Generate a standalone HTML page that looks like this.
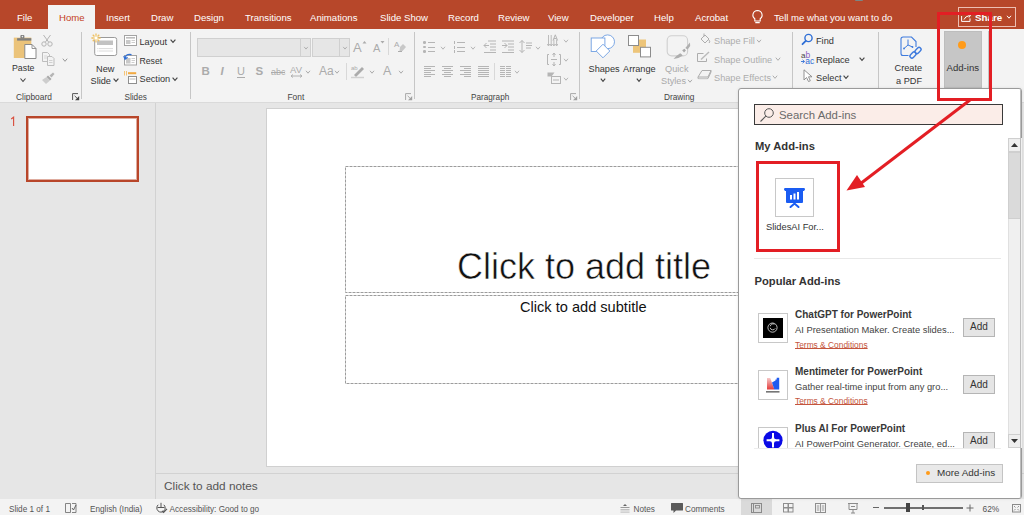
<!DOCTYPE html>
<html><head><meta charset="utf-8"><style>
html,body{margin:0;padding:0}
body{width:1024px;height:515px;overflow:hidden;position:relative;background:#E6E6E6;font-family:"Liberation Sans",sans-serif}
.t{position:absolute;line-height:1;white-space:nowrap}
svg{overflow:visible}
</style></head><body>
<div style="position:absolute;left:0px;top:0px;width:1024px;height:29px;background:#B7472A"></div>
<div style="position:absolute;left:0px;top:29px;width:1024px;height:73px;background:#F3F3F3"></div>
<div style="position:absolute;left:0px;top:102px;width:1024px;height:1px;background:#DADADA"></div>
<div style="position:absolute;left:155px;top:103px;width:1px;height:396px;background:#D2D2D2"></div>
<div style="position:absolute;left:48px;top:5px;width:47px;height:24px;background:#F3F3F3"></div>
<div class="t" style="left:17px;top:13px;font-size:9.60px;color:#FFFFFF;font-weight:normal;">File</div>
<div class="t" style="left:106px;top:13px;font-size:9.60px;color:#FFFFFF;font-weight:normal;">Insert</div>
<div class="t" style="left:151px;top:13px;font-size:9.60px;color:#FFFFFF;font-weight:normal;">Draw</div>
<div class="t" style="left:194px;top:13px;font-size:9.60px;color:#FFFFFF;font-weight:normal;">Design</div>
<div class="t" style="left:245px;top:13px;font-size:9.60px;color:#FFFFFF;font-weight:normal;">Transitions</div>
<div class="t" style="left:310px;top:13px;font-size:9.60px;color:#FFFFFF;font-weight:normal;">Animations</div>
<div class="t" style="left:380px;top:13px;font-size:9.60px;color:#FFFFFF;font-weight:normal;">Slide Show</div>
<div class="t" style="left:448px;top:13px;font-size:9.60px;color:#FFFFFF;font-weight:normal;">Record</div>
<div class="t" style="left:498px;top:13px;font-size:9.60px;color:#FFFFFF;font-weight:normal;">Review</div>
<div class="t" style="left:548px;top:13px;font-size:9.60px;color:#FFFFFF;font-weight:normal;">View</div>
<div class="t" style="left:590px;top:13px;font-size:9.60px;color:#FFFFFF;font-weight:normal;">Developer</div>
<div class="t" style="left:654px;top:13px;font-size:9.60px;color:#FFFFFF;font-weight:normal;">Help</div>
<div class="t" style="left:695px;top:13px;font-size:9.60px;color:#FFFFFF;font-weight:normal;">Acrobat</div>
<div class="t" style="left:59px;top:13px;font-size:9.60px;color:#C43E1C;font-weight:normal;">Home</div>
<svg style="position:absolute;left:751px;top:9px" width="13" height="16" viewBox="0 0 13 16"><path d="M6.5 1.5 a4.6 4.6 0 0 0 -2.7 8.3 v2.2 h5.4 v-2.2 a4.6 4.6 0 0 0 -2.7 -8.3z M4.3 13.6 h4.4" fill="none" stroke="#fff" stroke-width="1.1"/></svg>
<div class="t" style="left:774px;top:13px;font-size:9.60px;color:#FFFFFF;font-weight:normal;">Tell me what you want to do</div>
<div style="position:absolute;left:958px;top:7px;width:58px;height:19.5px;border:1px solid #EDBFB3;box-sizing:border-box"></div>
<svg style="position:absolute;left:961px;top:14px" width="10" height="8" viewBox="0 0 10 8"><path d="M0.6 2 v5.4 h8.4 v-3" fill="none" stroke="#fff" stroke-width="1"/><path d="M3 5.5 q1 -3 5.5 -4" fill="none" stroke="#fff" stroke-width="1"/><path d="M7 0 L9.5 1.2 L8 3.5" fill="none" stroke="#fff" stroke-width="1"/></svg>
<div class="t" style="left:975px;top:13px;font-size:9.80px;color:#FFFFFF;font-weight:bold;">Share</div>
<svg style="position:absolute;left:1005px;top:14px" width="8" height="6" viewBox="0 0 8 6"><path d="M2.00 1.80 L4 4.20 L6.00 1.80" fill="none" stroke="#fff" stroke-width="1"/></svg>
<div style="position:absolute;left:855px;top:0px;width:8px;height:1.2px;background:#7A8686;border-radius:0 0 3px 3px"></div>
<div style="position:absolute;left:81px;top:32px;width:1px;height:67px;background:#C6C6C6"></div>
<div style="position:absolute;left:190px;top:32px;width:1px;height:67px;background:#C6C6C6"></div>
<div style="position:absolute;left:414px;top:32px;width:1px;height:67px;background:#C6C6C6"></div>
<div style="position:absolute;left:579px;top:32px;width:1px;height:67px;background:#C6C6C6"></div>
<div style="position:absolute;left:792px;top:32px;width:1px;height:67px;background:#C6C6C6"></div>
<div style="position:absolute;left:878px;top:32px;width:1px;height:67px;background:#C6C6C6"></div>
<div style="position:absolute;left:988px;top:31px;width:1px;height:57px;background:#C6C6C6"></div>
<div class="t" style="left:16px;top:93px;font-size:8.40px;color:#444;font-weight:normal;">Clipboard</div>
<div class="t" style="left:124.5px;top:94px;font-size:8.20px;color:#444;font-weight:normal;">Slides</div>
<div class="t" style="left:287.5px;top:93px;font-size:8.40px;color:#444;font-weight:normal;">Font</div>
<div class="t" style="left:471px;top:94px;font-size:8.20px;color:#444;font-weight:normal;">Paragraph</div>
<div class="t" style="left:664px;top:93px;font-size:8.30px;color:#444;font-weight:normal;">Drawing</div>
<svg style="position:absolute;left:72px;top:92.8px" width="8" height="8" viewBox="0 0 8 8"><path d="M0.6 7 V0.6 H6" fill="none" stroke="#555" stroke-width="1"/><path d="M2.6 2.8 L6 6.2" stroke="#555" stroke-width="1"/><path d="M3 7.2 H7.2 V3z" fill="#444"/></svg>
<svg style="position:absolute;left:405px;top:92.8px" width="8" height="8" viewBox="0 0 8 8"><path d="M0.6 7 V0.6 H6" fill="none" stroke="#A8A8A8" stroke-width="1"/><path d="M2.6 2.8 L6 6.2" stroke="#A8A8A8" stroke-width="1"/><path d="M3 7.2 H7.2 V3z" fill="#A0A0A0"/></svg>
<svg style="position:absolute;left:570px;top:92.8px" width="8" height="8" viewBox="0 0 8 8"><path d="M0.6 7 V0.6 H6" fill="none" stroke="#A8A8A8" stroke-width="1"/><path d="M2.6 2.8 L6 6.2" stroke="#A8A8A8" stroke-width="1"/><path d="M3 7.2 H7.2 V3z" fill="#A0A0A0"/></svg>
<svg style="position:absolute;left:13px;top:34px" width="24" height="26" viewBox="0 0 24 26"><rect x="0.8" y="3.6" width="17.5" height="20.4" fill="#EBC37A"/><rect x="4.1" y="4.2" width="14.2" height="2.4" fill="#7E7E7E"/><rect x="7.4" y="1" width="4" height="3.6" rx="1" fill="#7E7E7E"/><circle cx="9.4" cy="2.6" r="0.8" fill="#EEE"/><path d="M11.8 10.5 h7.2 l4 4 v10 h-11.2z" fill="#fff" stroke="#8a8a8a" stroke-width="1"/><path d="M19 10.5 v4 h4" fill="none" stroke="#8a8a8a" stroke-width="0.9"/></svg>
<div class="t" style="left:12px;top:64px;font-size:8.80px;color:#333;font-weight:normal;">Paste</div>
<svg style="position:absolute;left:19px;top:77px" width="8" height="6" viewBox="0 0 8 6"><path d="M1.50 1.50 L4 4.50 L6.50 1.50" fill="none" stroke="#444" stroke-width="1.1"/></svg>
<svg style="position:absolute;left:41px;top:34px" width="12" height="13" viewBox="0 0 12 13"><circle cx="3" cy="10" r="2.2" fill="none" stroke="#B4B4B4"/><circle cx="9" cy="10" r="2.2" fill="none" stroke="#B4B4B4"/><path d="M4.3 8.2 L9.5 1 M7.7 8.2 L2.5 1" stroke="#B4B4B4" stroke-width="1"/></svg>
<svg style="position:absolute;left:41px;top:52px" width="14" height="14" viewBox="0 0 14 14"><path d="M1.5 0.5 h5 l2 2 v7 h-7z" fill="#F3F3F3" stroke="#BDBDBD"/><path d="M3 4 h3 M3 6 h3" stroke="#CFCFCF" stroke-width="0.8"/><path d="M6.5 4.5 h4.5 l2 2 v7 h-6.5z" fill="#F3F3F3" stroke="#BDBDBD"/><path d="M8 8.5 h3.5 M8 10.5 h3.5" stroke="#C8C8C8" stroke-width="0.8"/></svg>
<svg style="position:absolute;left:61px;top:57px" width="8" height="6" viewBox="0 0 8 6"><path d="M1.80 1.68 L4 4.32 L6.20 1.68" fill="none" stroke="#999" stroke-width="1"/></svg>
<svg style="position:absolute;left:41px;top:72px" width="14" height="12" viewBox="0 0 14 12"><path d="M8.5 3.5 L12 0.5 L13.5 2 L10.5 5.5z" fill="#B5B5B5"/><path d="M7 3.5 L10.5 7 L9 8.5 L5.5 5z" fill="#A8A8A8"/><path d="M5.5 5 L9 8.5 L5 12 L1 8z" fill="#CDCDCD"/></svg>
<svg style="position:absolute;left:86px;top:30px" width="36" height="30" viewBox="0 0 36 30"><rect x="8.7" y="7.5" width="22" height="18" rx="2" fill="#fff" stroke="#9A9A9A" stroke-width="1"/><rect x="11" y="10.5" width="16" height="4.5" fill="#C2C2C2"/><path d="M13 18.6 h14 M13 21 h14" stroke="#D0D0D0" stroke-width="0.8"/><path d="M11.5 18.6 h0.8 M11.5 21 h0.8" stroke="#BBB" stroke-width="0.8"/><path d="M12.20 8.00 L14.60 8.00 M11.56 9.56 L13.25 11.25 M10.00 10.20 L10.00 12.60 M8.44 9.56 L6.75 11.25 M7.80 8.00 L5.40 8.00 M8.44 6.44 L6.75 4.75 M10.00 5.80 L10.00 3.40 M11.56 6.44 L13.25 4.75 " stroke="#F0C060" stroke-width="1.3"/><circle cx="10" cy="8" r="1.9" fill="#fff" stroke="#F5D58E" stroke-width="0.8"/></svg>
<div class="t" style="left:96px;top:65px;font-size:9.20px;color:#333;font-weight:normal;">New</div>
<div class="t" style="left:90.5px;top:77px;font-size:9.20px;color:#333;font-weight:normal;">Slide</div>
<svg style="position:absolute;left:111.8px;top:77px" width="8" height="6" viewBox="0 0 8 6"><path d="M1.60 1.56 L4 4.44 L6.40 1.56" fill="none" stroke="#444" stroke-width="1.1"/></svg>
<svg style="position:absolute;left:123px;top:35px" width="14" height="12" viewBox="0 0 14 12"><rect x="1.5" y="0.5" width="12" height="10" fill="#fff" stroke="#A3A3A3"/><rect x="3" y="2" width="9" height="1.6" fill="#BDBDBD"/><rect x="3" y="5" width="4.5" height="4" fill="#C8C8C8"/><path d="M8.5 5.5 h3.5 M8.5 7.5 h3.5" stroke="#C8C8C8" stroke-width="0.9"/></svg>
<div class="t" style="left:139.5px;top:38px;font-size:9.20px;color:#333;font-weight:normal;">Layout</div>
<svg style="position:absolute;left:168.7px;top:37.8px" width="8" height="6" viewBox="0 0 8 6"><path d="M1.60 1.56 L4 4.44 L6.40 1.56" fill="none" stroke="#444" stroke-width="1.1"/></svg>
<svg style="position:absolute;left:122px;top:52px" width="15" height="14" viewBox="0 0 15 14"><rect x="2.5" y="3.5" width="12" height="9.5" fill="#fff" stroke="#A3A3A3"/><rect x="4" y="6" width="4.5" height="5.5" fill="#C8C8C8"/><path d="M9.5 6.5 h3.5 M9.5 8.5 h3.5 M9.5 10.5 h3" stroke="#C8C8C8" stroke-width="0.9"/><path d="M3.2 6.2 Q4 1.2 9.5 2.6" fill="none" stroke="#2F6FD6" stroke-width="1.3"/><path d="M1.8 4 L3 7.2 L5.6 5.2" fill="none" stroke="#2F6FD6" stroke-width="1.2"/></svg>
<div class="t" style="left:139.5px;top:57px;font-size:8.70px;color:#333;font-weight:normal;">Reset</div>
<svg style="position:absolute;left:122px;top:70px" width="15" height="14" viewBox="0 0 15 14"><path d="M6 3.2 h8.2" stroke="#F0A840" stroke-width="2"/><path d="M2.5 1 v4.5 M4.5 1 v4.5" stroke="#F4BE6A" stroke-width="0.9"/><rect x="6.5" y="6.5" width="8" height="7" fill="#fff" stroke="#8f8f8f"/><path d="M7.5 9 h6" stroke="#B0B0B0" stroke-width="0.9"/></svg>
<div class="t" style="left:139.5px;top:75px;font-size:9.20px;color:#333;font-weight:normal;">Section</div>
<svg style="position:absolute;left:171.4px;top:75.5px" width="8" height="6" viewBox="0 0 8 6"><path d="M1.60 1.56 L4 4.44 L6.40 1.56" fill="none" stroke="#444" stroke-width="1.1"/></svg>
<div style="position:absolute;left:197px;top:38px;width:114px;height:19px;background:#E6E6E6;border:1px solid #D0D0D0;box-sizing:border-box"></div>
<div style="position:absolute;left:300px;top:38px;width:1px;height:19px;background:#D0D0D0"></div>
<svg style="position:absolute;left:302px;top:45px" width="8" height="6" viewBox="0 0 8 6"><path d="M2.20 1.92 L4 4.08 L5.80 1.92" fill="none" stroke="#AAA" stroke-width="0.9"/></svg>
<div style="position:absolute;left:312px;top:38px;width:38px;height:19px;background:#E6E6E6;border:1px solid #D0D0D0;box-sizing:border-box"></div>
<div style="position:absolute;left:339px;top:38px;width:1px;height:19px;background:#D0D0D0"></div>
<svg style="position:absolute;left:340.5px;top:45px" width="8" height="6" viewBox="0 0 8 6"><path d="M2.20 1.92 L4 4.08 L5.80 1.92" fill="none" stroke="#AAA" stroke-width="0.9"/></svg>
<div class="t" style="left:353px;top:41px;font-size:13.00px;color:#ABABAB;font-weight:normal;">A</div>
<svg style="position:absolute;left:362px;top:40px" width="5" height="4" viewBox="0 0 5 4"><path d="M0.5 3.5 L2.5 1 L4.5 3.5z" fill="#ABABAB"/></svg>
<div class="t" style="left:373px;top:43px;font-size:11.00px;color:#ABABAB;font-weight:normal;">A</div>
<svg style="position:absolute;left:380px;top:40px" width="5" height="4" viewBox="0 0 5 4"><path d="M0.5 1 L2.5 3.5 L4.5 1z" fill="#ABABAB"/></svg>
<div style="position:absolute;left:388px;top:38px;width:1px;height:17px;background:#D8D8D8"></div>
<svg style="position:absolute;left:394px;top:40px" width="12" height="12" viewBox="0 0 12 12"><text x="0" y="7" font-size="8" fill="#ABABAB" font-family="Liberation Sans">A</text><path d="M6 7 L9 4 L12 7 L8.5 11 L5.5 11z" fill="#C8C8C8"/><path d="M4 11.5 h4" stroke="#ABABAB"/></svg>
<div class="t" style="left:201.5px;top:66px;font-size:11.50px;color:#ABABAB;font-weight:bold;">B</div>
<div class="t" style="left:220.5px;top:66px;font-size:11.50px;color:#ABABAB;font-weight:bold;font-style:italic">I</div>
<div class="t" style="left:237px;top:66px;font-size:11.00px;color:#ABABAB;font-weight:normal;">U</div>
<div style="position:absolute;left:237px;top:76.5px;width:8px;height:1px;background:#ABABAB"></div>
<div class="t" style="left:255.5px;top:66px;font-size:11.50px;color:#ABABAB;font-weight:bold;">S</div>
<div class="t" style="left:271px;top:68px;font-size:9.00px;color:#ABABAB;font-weight:normal;">abc</div>
<div style="position:absolute;left:271px;top:71.5px;width:14px;height:1px;background:#ABABAB"></div>
<div class="t" style="left:290px;top:65px;font-size:9.50px;color:#ABABAB;font-weight:normal;">AV</div>
<svg style="position:absolute;left:290px;top:74px" width="13" height="4" viewBox="0 0 13 4"><path d="M1 2 h11 M3 0.5 L1 2 L3 3.5 M10 0.5 L12 2 L10 3.5" fill="none" stroke="#ABABAB" stroke-width="0.9"/></svg>
<svg style="position:absolute;left:304px;top:69px" width="8" height="6" viewBox="0 0 8 6"><path d="M2.00 1.80 L4 4.20 L6.00 1.80" fill="none" stroke="#ABABAB" stroke-width="1"/></svg>
<div class="t" style="left:319px;top:65px;font-size:12.00px;color:#ABABAB;font-weight:normal;">Aa</div>
<svg style="position:absolute;left:333px;top:69px" width="8" height="6" viewBox="0 0 8 6"><path d="M2.00 1.80 L4 4.20 L6.00 1.80" fill="none" stroke="#ABABAB" stroke-width="1"/></svg>
<div style="position:absolute;left:346px;top:63px;width:1px;height:17px;background:#D8D8D8"></div>
<svg style="position:absolute;left:351px;top:64.5px" width="14" height="13" viewBox="0 0 14 13"><text x="0" y="5" font-size="6" fill="#ABABAB" font-family="Liberation Sans">ab</text><path d="M3 10 L11 2 L13 4 L5 12z" fill="#ABABAB"/><path d="M0 12.5 h13" stroke="#D0D0D0" stroke-width="1.5"/></svg>
<svg style="position:absolute;left:368px;top:69px" width="8" height="6" viewBox="0 0 8 6"><path d="M2.00 1.80 L4 4.20 L6.00 1.80" fill="none" stroke="#ABABAB" stroke-width="1"/></svg>
<div class="t" style="left:383px;top:65px;font-size:12.50px;color:#ABABAB;font-weight:normal;">A</div>
<svg style="position:absolute;left:397px;top:69px" width="8" height="6" viewBox="0 0 8 6"><path d="M2.00 1.80 L4 4.20 L6.00 1.80" fill="none" stroke="#ABABAB" stroke-width="1"/></svg>
<div style="position:absolute;left:423px;top:41.0px;width:2.5px;height:2.5px;background:#B5B5B5;border-radius:50%"></div>
<div style="position:absolute;left:428px;top:42.0px;width:7px;height:1px;background:#B5B5B5"></div>
<div style="position:absolute;left:423px;top:45.5px;width:2.5px;height:2.5px;background:#B5B5B5;border-radius:50%"></div>
<div style="position:absolute;left:428px;top:46.5px;width:7px;height:1px;background:#B5B5B5"></div>
<div style="position:absolute;left:423px;top:50.0px;width:2.5px;height:2.5px;background:#B5B5B5;border-radius:50%"></div>
<div style="position:absolute;left:428px;top:51.0px;width:7px;height:1px;background:#B5B5B5"></div>
<svg style="position:absolute;left:439px;top:45px" width="8" height="6" viewBox="0 0 8 6"><path d="M2.00 1.80 L4 4.20 L6.00 1.80" fill="none" stroke="#B5B5B5" stroke-width="1"/></svg>
<div style="position:absolute;left:454px;top:41.0px;width:1px;height:3px;background:#B5B5B5"></div>
<div style="position:absolute;left:457px;top:42.0px;width:8px;height:1px;background:#B5B5B5"></div>
<div style="position:absolute;left:454px;top:45.5px;width:1px;height:3px;background:#B5B5B5"></div>
<div style="position:absolute;left:457px;top:46.5px;width:8px;height:1px;background:#B5B5B5"></div>
<div style="position:absolute;left:454px;top:50.0px;width:1px;height:3px;background:#B5B5B5"></div>
<div style="position:absolute;left:457px;top:51.0px;width:8px;height:1px;background:#B5B5B5"></div>
<svg style="position:absolute;left:469px;top:45px" width="8" height="6" viewBox="0 0 8 6"><path d="M2.00 1.80 L4 4.20 L6.00 1.80" fill="none" stroke="#B5B5B5" stroke-width="1"/></svg>
<svg style="position:absolute;left:483px;top:40px" width="14" height="13" viewBox="0 0 14 13"><path d="M5 1 h8 M7 4 h6 M7 7 h6 M7 10 h6 M1 12.5 h12" stroke="#B5B5B5"/><path d="M1 5.5 h5 M3.5 3 L1 5.5 L3.5 8" fill="none" stroke="#B5B5B5"/></svg>
<svg style="position:absolute;left:501px;top:40px" width="14" height="13" viewBox="0 0 14 13"><path d="M1 1 h12 M7 4 h6 M7 7 h6 M7 10 h6 M1 12.5 h12" stroke="#B5B5B5"/><path d="M1 5.5 h5 M3.5 3 L6 5.5 L3.5 8" fill="none" stroke="#B5B5B5"/></svg>
<svg style="position:absolute;left:519px;top:40px" width="14" height="13" viewBox="0 0 14 13"><path d="M3 0.5 v12 M0.5 3 L3 0.5 L5.5 3 M0.5 10 L3 12.5 L5.5 10" fill="none" stroke="#B5B5B5"/><path d="M7 3 h6 M7 5.5 h6 M7 8 h5" stroke="#B5B5B5"/></svg>
<svg style="position:absolute;left:534px;top:45px" width="8" height="6" viewBox="0 0 8 6"><path d="M2.00 1.80 L4 4.20 L6.00 1.80" fill="none" stroke="#B5B5B5" stroke-width="1"/></svg>
<div style="position:absolute;left:424px;top:65.5px;width:11px;height:1px;background:#B5B5B5"></div>
<div style="position:absolute;left:424px;top:67.55px;width:7px;height:1px;background:#B5B5B5"></div>
<div style="position:absolute;left:424px;top:69.6px;width:11px;height:1px;background:#B5B5B5"></div>
<div style="position:absolute;left:424px;top:71.65px;width:7px;height:1px;background:#B5B5B5"></div>
<div style="position:absolute;left:424px;top:73.7px;width:11px;height:1px;background:#B5B5B5"></div>
<div style="position:absolute;left:424px;top:75.75px;width:7px;height:1px;background:#B5B5B5"></div>
<div style="position:absolute;left:442px;top:65.5px;width:11px;height:1px;background:#B5B5B5"></div>
<div style="position:absolute;left:444px;top:67.55px;width:7px;height:1px;background:#B5B5B5"></div>
<div style="position:absolute;left:442px;top:69.6px;width:11px;height:1px;background:#B5B5B5"></div>
<div style="position:absolute;left:444px;top:71.65px;width:7px;height:1px;background:#B5B5B5"></div>
<div style="position:absolute;left:442px;top:73.7px;width:11px;height:1px;background:#B5B5B5"></div>
<div style="position:absolute;left:444px;top:75.75px;width:7px;height:1px;background:#B5B5B5"></div>
<div style="position:absolute;left:460px;top:65.5px;width:11px;height:1px;background:#B5B5B5"></div>
<div style="position:absolute;left:464px;top:67.55px;width:7px;height:1px;background:#B5B5B5"></div>
<div style="position:absolute;left:460px;top:69.6px;width:11px;height:1px;background:#B5B5B5"></div>
<div style="position:absolute;left:464px;top:71.65px;width:7px;height:1px;background:#B5B5B5"></div>
<div style="position:absolute;left:460px;top:73.7px;width:11px;height:1px;background:#B5B5B5"></div>
<div style="position:absolute;left:464px;top:75.75px;width:7px;height:1px;background:#B5B5B5"></div>
<div style="position:absolute;left:478px;top:65.5px;width:11px;height:1px;background:#B5B5B5"></div>
<div style="position:absolute;left:478px;top:67.55px;width:11px;height:1px;background:#B5B5B5"></div>
<div style="position:absolute;left:478px;top:69.6px;width:11px;height:1px;background:#B5B5B5"></div>
<div style="position:absolute;left:478px;top:71.65px;width:11px;height:1px;background:#B5B5B5"></div>
<div style="position:absolute;left:478px;top:73.7px;width:11px;height:1px;background:#B5B5B5"></div>
<div style="position:absolute;left:478px;top:75.75px;width:11px;height:1px;background:#B5B5B5"></div>
<div style="position:absolute;left:494px;top:63px;width:1px;height:17px;background:#D8D8D8"></div>
<div style="position:absolute;left:500px;top:65.5px;width:5px;height:1px;background:#B5B5B5"></div>
<div style="position:absolute;left:506px;top:65.5px;width:5px;height:1px;background:#B5B5B5"></div>
<div style="position:absolute;left:500px;top:67.55px;width:5px;height:1px;background:#B5B5B5"></div>
<div style="position:absolute;left:506px;top:67.55px;width:5px;height:1px;background:#B5B5B5"></div>
<div style="position:absolute;left:500px;top:69.6px;width:5px;height:1px;background:#B5B5B5"></div>
<div style="position:absolute;left:506px;top:69.6px;width:5px;height:1px;background:#B5B5B5"></div>
<div style="position:absolute;left:500px;top:71.65px;width:5px;height:1px;background:#B5B5B5"></div>
<div style="position:absolute;left:506px;top:71.65px;width:5px;height:1px;background:#B5B5B5"></div>
<div style="position:absolute;left:500px;top:73.7px;width:5px;height:1px;background:#B5B5B5"></div>
<div style="position:absolute;left:506px;top:73.7px;width:5px;height:1px;background:#B5B5B5"></div>
<div style="position:absolute;left:500px;top:75.75px;width:5px;height:1px;background:#B5B5B5"></div>
<div style="position:absolute;left:506px;top:75.75px;width:5px;height:1px;background:#B5B5B5"></div>
<svg style="position:absolute;left:513px;top:69px" width="8" height="6" viewBox="0 0 8 6"><path d="M2.00 1.80 L4 4.20 L6.00 1.80" fill="none" stroke="#B5B5B5" stroke-width="1"/></svg>
<svg style="position:absolute;left:547px;top:34px" width="14" height="14" viewBox="0 0 14 14"><path d="M1.5 1 v10.5 M4.2 1 v10.5 M6.9 5.5 v6 M9.6 5.5 v6" fill="none" stroke="#B5B5B5" stroke-width="0.9"/><path d="M0.3 10 L1.5 12 L2.7 10 M3 10 L4.2 12 L5.4 10 M5.7 10 L6.9 12 L8.1 10 M8.4 10 L9.6 12 L10.8 10" fill="none" stroke="#B5B5B5" stroke-width="0.9"/><path d="M6 6.5 L8.3 0.8 L10.6 6.5 M7 4.5 h2.6" fill="none" stroke="#B5B5B5" stroke-width="1"/></svg>
<svg style="position:absolute;left:562px;top:38px" width="8" height="6" viewBox="0 0 8 6"><path d="M2.00 1.80 L4 4.20 L6.00 1.80" fill="none" stroke="#B5B5B5" stroke-width="1"/></svg>
<svg style="position:absolute;left:547px;top:53px" width="14" height="13" viewBox="0 0 14 13"><path d="M0.5 1.5 v10 h1.5 M13.5 1.5 v10 h-1.5 M0.5 1.5 h1.5 M13.5 1.5 h-1.5 M4 6.5 h6" fill="none" stroke="#B5B5B5"/><path d="M7 0 v4 M5.5 2 L7 0 L8.5 2 M7 9 v4 M5.5 11 L7 13 L8.5 11" fill="none" stroke="#B5B5B5"/></svg>
<svg style="position:absolute;left:562px;top:57px" width="8" height="6" viewBox="0 0 8 6"><path d="M2.00 1.80 L4 4.20 L6.00 1.80" fill="none" stroke="#B5B5B5" stroke-width="1"/></svg>
<svg style="position:absolute;left:547px;top:72px" width="14" height="12" viewBox="0 0 14 12"><path d="M0.5 0.5 h7 l-3 4 h-4z" fill="#B5B5B5"/><rect x="4.5" y="4.5" width="9" height="7" fill="#F3F3F3" stroke="#B5B5B5"/><path d="M6 8 h6" stroke="#B5B5B5"/></svg>
<svg style="position:absolute;left:562px;top:76px" width="8" height="6" viewBox="0 0 8 6"><path d="M2.00 1.80 L4 4.20 L6.00 1.80" fill="none" stroke="#B5B5B5" stroke-width="1"/></svg>
<svg style="position:absolute;left:585px;top:30px" width="32" height="32" viewBox="0 0 32 32"><g fill="#fff" stroke="#6F9FE2" stroke-width="0.9"><circle cx="22.6" cy="11.8" r="6.9"/><rect x="6.2" y="8" width="13.7" height="13.5"/><path d="M18 14.2 L24.8 21 L18 27.8 L11.2 21z"/></g></svg>
<div class="t" style="left:588.5px;top:65px;font-size:9.20px;color:#333;font-weight:normal;">Shapes</div>
<svg style="position:absolute;left:599px;top:77px" width="8" height="6" viewBox="0 0 8 6"><path d="M1.80 1.68 L4 4.32 L6.20 1.68" fill="none" stroke="#444" stroke-width="1.1"/></svg>
<svg style="position:absolute;left:627px;top:34px" width="25" height="25" viewBox="0 0 25 25"><rect x="6" y="5.5" width="13" height="13.3" fill="#EDC57A"/><rect x="1.5" y="1.5" width="10" height="10" fill="#fff" stroke="#8C8C8C"/><rect x="13.5" y="13.3" width="10" height="9.6" fill="#fff" stroke="#8C8C8C"/></svg>
<div class="t" style="left:623px;top:65px;font-size:9.20px;color:#333;font-weight:normal;">Arrange</div>
<svg style="position:absolute;left:635px;top:77px" width="8" height="6" viewBox="0 0 8 6"><path d="M1.80 1.68 L4 4.32 L6.20 1.68" fill="none" stroke="#444" stroke-width="1.1"/></svg>
<svg style="position:absolute;left:662px;top:32px" width="34" height="30" viewBox="0 0 34 30"><rect x="5.2" y="3.8" width="20.4" height="20.1" rx="4.5" fill="none" stroke="#CFCFCF" stroke-width="1.1"/><path d="M28 10.5 L28.2 14 L25.6 17.5 L23.3 16z" fill="#AFAFAF"/><path d="M20.2 18.3 L22.4 16.7 L23.9 18.4 L22 20.6z" fill="#A8A8A8"/><path d="M18.2 21.3 Q19.8 22 20.6 23.8 Q17 26.5 11.5 27 Q14.5 23.5 18.2 21.3z" fill="#AEAEAE"/></svg>
<div class="t" style="left:665px;top:65px;font-size:9.20px;color:#A9A9A9;font-weight:normal;">Quick</div>
<div class="t" style="left:661px;top:77px;font-size:9.20px;color:#A9A9A9;font-weight:normal;">Styles</div>
<svg style="position:absolute;left:686px;top:78px" width="8" height="6" viewBox="0 0 8 6"><path d="M2.00 1.80 L4 4.20 L6.00 1.80" fill="none" stroke="#A9A9A9" stroke-width="1"/></svg>
<svg style="position:absolute;left:699px;top:33px" width="12" height="12" viewBox="0 0 12 12"><path d="M2 6 L6 2 L10 6 L6 10z" fill="none" stroke="#ADADAD"/><path d="M5 0.5 v3" stroke="#ADADAD"/><path d="M10 7 q1.5 2 0 3" fill="none" stroke="#ADADAD"/></svg>
<div class="t" style="left:714px;top:37px;font-size:9.20px;color:#ADADAD;font-weight:normal;">Shape Fill</div>
<svg style="position:absolute;left:755px;top:38px" width="8" height="6" viewBox="0 0 8 6"><path d="M2.00 1.80 L4 4.20 L6.00 1.80" fill="none" stroke="#ADADAD" stroke-width="1"/></svg>
<svg style="position:absolute;left:697px;top:51px" width="14" height="11" viewBox="0 0 14 11"><path d="M0.5 2.5 h6 M0.5 2.5 v8 h9 v-3" fill="none" stroke="#ADADAD"/><path d="M4 8.5 L12 1" stroke="#B9B9B9" stroke-width="1.4"/></svg>
<div class="t" style="left:714px;top:56px;font-size:9.20px;color:#ADADAD;font-weight:normal;">Shape Outline</div>
<svg style="position:absolute;left:774px;top:56px" width="8" height="6" viewBox="0 0 8 6"><path d="M1.80 1.68 L4 4.32 L6.20 1.68" fill="none" stroke="#ADADAD" stroke-width="1"/></svg>
<svg style="position:absolute;left:697px;top:69px" width="15" height="11" viewBox="0 0 15 11"><path d="M1 8 L5 1.5 h9 L11 8z" fill="#F3F3F3" stroke="#ADADAD"/><path d="M1 8 v1.5 h10 L14 3 v-1.5" fill="none" stroke="#ADADAD"/><path d="M1.5 9.5 h9" stroke="#C9C9C9" stroke-width="1.5"/></svg>
<div class="t" style="left:714px;top:74px;font-size:9.20px;color:#ADADAD;font-weight:normal;">Shape Effects</div>
<svg style="position:absolute;left:771px;top:74px" width="8" height="6" viewBox="0 0 8 6"><path d="M1.80 1.68 L4 4.32 L6.20 1.68" fill="none" stroke="#ADADAD" stroke-width="1"/></svg>
<svg style="position:absolute;left:801px;top:33px" width="13" height="13" viewBox="0 0 13 13"><circle cx="7.5" cy="5" r="3.6" fill="none" stroke="#2F6FD6" stroke-width="1.4"/><path d="M4.8 7.8 L1.5 11.2" stroke="#2F6FD6" stroke-width="1.8" stroke-linecap="round"/></svg>
<div class="t" style="left:816px;top:37px;font-size:9.20px;color:#333;font-weight:normal;">Find</div>
<svg style="position:absolute;left:800px;top:51px" width="15" height="15" viewBox="0 0 15 15"><text x="1" y="6.6" font-size="8" fill="#444" font-family="Liberation Sans">a</text><text x="5.6" y="6.6" font-size="8.5" fill="#8A5CC0" font-family="Liberation Sans">b</text><text x="5.2" y="13.4" font-size="8.5" fill="#2F6FD6" font-family="Liberation Sans">ac</text><path d="M1 10.5 h3.5 M2.6 8.8 L4.4 10.5 L2.6 12.2" fill="none" stroke="#2F6FD6" stroke-width="0.9"/></svg>
<div class="t" style="left:816px;top:56px;font-size:9.20px;color:#333;font-weight:normal;">Replace</div>
<svg style="position:absolute;left:858px;top:56px" width="8" height="6" viewBox="0 0 8 6"><path d="M1.60 1.56 L4 4.44 L6.40 1.56" fill="none" stroke="#444" stroke-width="1.1"/></svg>
<svg style="position:absolute;left:803px;top:69px" width="10" height="14" viewBox="0 0 10 14"><path d="M1 0.8 L1 11 L3.5 8.5 L5.5 12.5 L7.3 11.8 L5.5 7.8 L9 7.8z" fill="#fff" stroke="#888" stroke-width="0.9"/></svg>
<div class="t" style="left:816px;top:74px;font-size:9.20px;color:#333;font-weight:normal;">Select</div>
<svg style="position:absolute;left:842px;top:74px" width="8" height="6" viewBox="0 0 8 6"><path d="M1.60 1.56 L4 4.44 L6.40 1.56" fill="none" stroke="#444" stroke-width="1.1"/></svg>
<svg style="position:absolute;left:900px;top:36px" width="23" height="25" viewBox="0 0 23 25"><path d="M8.5 19.5 H3 a2 2 0 0 1 -2 -2 V3 a2 2 0 0 1 2 -2 H11.5 L16 5.5 V11" fill="none" stroke="#3F7BDD" stroke-width="1.1"/><path d="M8 3.5 v5.5 L4 12.5 M8 9 L12.5 11" fill="none" stroke="#3F7BDD" stroke-width="1"/><circle cx="4" cy="12.5" r="0.9" fill="#3F7BDD"/><circle cx="12.5" cy="11" r="0.9" fill="#3F7BDD"/><g fill="none" stroke="#3F7BDD" stroke-width="1.4"><rect x="9.5" y="17" width="7" height="4" rx="2" transform="rotate(-45 13 19)"/><rect x="14.5" y="12.5" width="7" height="4" rx="2" transform="rotate(-45 18 14.5)"/></g></svg>
<div class="t" style="left:894.5px;top:64px;font-size:9.20px;color:#333;font-weight:normal;">Create</div>
<div class="t" style="left:896px;top:77px;font-size:9.20px;color:#333;font-weight:normal;">a PDF</div>
<div style="position:absolute;left:944px;top:31px;width:38px;height:57px;background:#C6C6C6;border:1px solid #BDBDBD;box-sizing:border-box"></div>
<div style="position:absolute;left:958px;top:41px;width:8px;height:8px;background:#FF9B1A;border-radius:50%"></div>
<div class="t" style="left:946.5px;top:63px;font-size:9.60px;color:#333;font-weight:normal;">Add-ins</div>
<svg style="position:absolute;left:9px;top:116px" width="8" height="11" viewBox="0 0 8 11"><path d="M2.2 3 L4.6 1.2 V10" fill="none" stroke="#D9503F" stroke-width="1.15"/></svg>
<div style="position:absolute;left:26px;top:116px;width:113px;height:66px;background:#fff;border:2px solid #B8462A;box-sizing:border-box;box-shadow:inset 0 0 0 1px rgba(184,70,42,0.45)"></div>
<div style="position:absolute;left:266px;top:108px;width:640px;height:359px;background:#fff;border:1px solid #D0D0D0;box-sizing:border-box"></div>
<svg style="position:absolute;left:345px;top:166px" width="479" height="128" viewBox="0 0 479 128"><rect x="0.5" y="0.5" width="478" height="126" fill="none" stroke="#9C9C9C" stroke-width="1" stroke-dasharray="3 1"/></svg>
<svg style="position:absolute;left:345px;top:295px" width="479" height="90" viewBox="0 0 479 90"><rect x="0.5" y="0.5" width="478" height="88" fill="none" stroke="#9C9C9C" stroke-width="1" stroke-dasharray="3 1"/></svg>
<div class="t" style="left:457px;top:249px;font-size:36.00px;color:#111;font-weight:normal;-webkit-text-stroke:0.5px #fff">Click to add title</div>
<div class="t" style="left:520px;top:300px;font-size:14.60px;color:#111;font-weight:normal;">Click to add subtitle</div>
<div style="position:absolute;left:156px;top:473px;width:868px;height:1px;background:#D2D2D2"></div>
<div class="t" style="left:164px;top:481px;font-size:11.80px;color:#555;font-weight:normal;">Click to add notes</div>
<div style="position:absolute;left:0px;top:499px;width:1024px;height:16px;background:#F3F3F3"></div>
<div class="t" style="left:9px;top:506px;font-size:8.20px;color:#555;font-weight:normal;">Slide 1 of 1</div>
<svg style="position:absolute;left:65px;top:503px" width="12" height="10" viewBox="0 0 12 10"><path d="M0.5 0.5 h5 v9 h-5z" fill="none" stroke="#777" stroke-width="0.9"/><path d="M7 0.5 h4 v9 h-4" fill="none" stroke="#777" stroke-width="0.9"/><path d="M7 5 L8.5 7 L11 2" fill="none" stroke="#555" stroke-width="0.9"/></svg>
<div class="t" style="left:90px;top:506px;font-size:8.20px;color:#555;font-weight:normal;">English (India)</div>
<svg style="position:absolute;left:155px;top:502px" width="13" height="11" viewBox="0 0 13 11"><path d="M3.2 2.8 A4.2 4.2 0 1 0 8.8 2.8" fill="none" stroke="#555" stroke-width="1"/><path d="M6 0.8 v4.5 M2.5 5.5 h7" stroke="#555" stroke-width="1"/><path d="M7 8.8 l1.6 1.6 l3.4 -3.6" fill="none" stroke="#555" stroke-width="1.1"/></svg>
<div class="t" style="left:169.5px;top:506px;font-size:8.20px;color:#555;font-weight:normal;">Accessibility: Good to go</div>
<svg style="position:absolute;left:620px;top:503px" width="10" height="10" viewBox="0 0 10 10"><path d="M3 3 L5 1 L7 3z" fill="#666"/><rect x="0.5" y="4" width="9" height="1" fill="#9A9A9A"/><rect x="0.5" y="6.3" width="9" height="1" fill="#AAAAAA"/><rect x="0.5" y="8.6" width="9" height="1" fill="#BBBBBB"/></svg>
<div class="t" style="left:633.5px;top:506px;font-size:8.20px;color:#555;font-weight:normal;">Notes</div>
<svg style="position:absolute;left:671px;top:503px" width="13" height="10" viewBox="0 0 13 10"><path d="M0 0.5 Q0 0 0.5 0 H11.5 Q12 0 12 0.5 V7 Q12 7.5 11.5 7.5 H5 L2.5 10 V7.5 H0.5 Q0 7.5 0 7z" fill="#5A5A5A"/></svg>
<div class="t" style="left:685px;top:506px;font-size:8.20px;color:#555;font-weight:normal;">Comments</div>
<div style="position:absolute;left:741px;top:499px;width:31px;height:16px;background:#DADADA"></div>
<svg style="position:absolute;left:751px;top:503px" width="11" height="10" viewBox="0 0 11 10"><rect x="0.5" y="0.5" width="10" height="9" fill="none" stroke="#8A8A8A"/><path d="M2.5 0.5 v9" stroke="#8A8A8A"/><rect x="4.5" y="2.5" width="4" height="2.5" fill="none" stroke="#8A8A8A" stroke-width="0.9"/></svg>
<svg style="position:absolute;left:783px;top:503px" width="11" height="10" viewBox="0 0 11 10"><g fill="none" stroke="#8E8E8E"><rect x="0.5" y="0.5" width="4.5" height="4"/><rect x="5.5" y="0.5" width="4.5" height="4"/><rect x="0.5" y="5" width="4.5" height="4"/><rect x="5.5" y="5" width="4.5" height="4"/></g></svg>
<svg style="position:absolute;left:815px;top:503px" width="11" height="10" viewBox="0 0 11 10"><rect x="0.5" y="0.5" width="10" height="9" fill="none" stroke="#8E8E8E"/><path d="M5.5 0.5 v9 M1.8 3 h2.5 M1.8 5 h2.5 M1.8 7 h2.5 M6.8 3 h2.5 M6.8 5 h2.5 M6.8 7 h2.5" stroke="#8E8E8E" stroke-width="0.9"/></svg>
<svg style="position:absolute;left:848px;top:503px" width="11" height="11" viewBox="0 0 11 11"><path d="M0 0.5 h10 M1 0.5 v6 h8 v-6 M5 6.5 v3.5 M3 10 h4" fill="none" stroke="#8A8A8A"/><path d="M3 3.5 h4" stroke="#8A8A8A"/></svg>
<div style="position:absolute;left:873px;top:507px;width:6px;height:1px;background:#666"></div>
<div style="position:absolute;left:884px;top:507.3px;width:79px;height:1.5px;background:#707070"></div>
<div style="position:absolute;left:906px;top:503px;width:4px;height:9px;background:#444"></div>
<div style="position:absolute;left:922px;top:505px;width:2px;height:5px;background:#555"></div>
<svg style="position:absolute;left:966px;top:504px" width="8" height="8" viewBox="0 0 8 8"><path d="M4 0.5 v7 M0.5 4 h7" stroke="#6A6A6A" stroke-width="1"/></svg>
<div class="t" style="left:982.5px;top:505px;font-size:8.40px;color:#555;font-weight:normal;">62%</div>
<svg style="position:absolute;left:1012px;top:504px" width="9" height="9" viewBox="0 0 9 9"><rect x="0.5" y="0.5" width="8" height="7.5" fill="none" stroke="#8A8A8A"/><path d="M2 2 L3.5 3.5 M7 2 L5.5 3.5 M2 6.5 L3.5 5 M7 6.5 L5.5 5" stroke="#8A8A8A" stroke-width="0.9"/></svg>
<div style="position:absolute;left:738px;top:88px;width:284px;height:411px;background:#fff;border:1px solid #9A9A9A;box-sizing:border-box;border-radius:3px;box-shadow:0 0 3px rgba(0,0,0,0.10)"></div>
<div style="position:absolute;left:754px;top:104px;width:249px;height:21px;background:#FBEDE8;border:1.5px solid #3A3A3A;box-sizing:border-box"></div>
<svg style="position:absolute;left:759px;top:107px" width="16" height="16" viewBox="0 0 16 16"><circle cx="10" cy="6" r="4.3" fill="none" stroke="#555" stroke-width="1"/><path d="M6.8 9.2 L1.5 14.5" stroke="#555" stroke-width="1.1"/></svg>
<div class="t" style="left:779px;top:110px;font-size:11.40px;color:#6a6a6a;font-weight:normal;">Search Add-ins</div>
<div class="t" style="left:755px;top:141px;font-size:11.20px;color:#333;font-weight:bold;font-weight:600">My Add-ins</div>
<div style="position:absolute;left:1008px;top:138px;width:13px;height:310px;background:#F0F0F0;border-left:1px solid #E0E0E0"></div>
<div style="position:absolute;left:1008px;top:138px;width:13px;height:14px;background:#EEEEEE;border:1px solid #CFCFCF;box-sizing:border-box"></div>
<svg style="position:absolute;left:1010px;top:141px" width="9" height="8" viewBox="0 0 9 8"><path d="M1 6 L4.5 2 L8 6z" fill="#333"/></svg>
<div style="position:absolute;left:1008px;top:152px;width:13px;height:67px;background:#DADADA;border:1px solid #CFCFCF;box-sizing:border-box"></div>
<div style="position:absolute;left:1008px;top:434px;width:13px;height:14px;background:#EEEEEE;border:1px solid #CFCFCF;box-sizing:border-box"></div>
<svg style="position:absolute;left:1010px;top:437px" width="9" height="8" viewBox="0 0 9 8"><path d="M1 2 L4.5 6 L8 2z" fill="#333"/></svg>
<div style="position:absolute;left:1020px;top:88px;width:1px;height:410px;background:#BDBDBD"></div>
<div style="position:absolute;left:775px;top:178px;width:39px;height:39px;background:#fff;border:1px solid #C8C8C8;box-sizing:border-box"></div>
<svg style="position:absolute;left:784px;top:188px" width="21" height="20" viewBox="0 0 21 20"><path d="M0.5 0 H20.5 L21 1.5 L20 3 H1 L0 1.5z" fill="#1A5CF2"/><rect x="2" y="2" width="17" height="13" rx="1" fill="#1A5CF2"/><rect x="6" y="7" width="2" height="4.5" fill="#fff"/><rect x="9.5" y="5.5" width="2" height="6" fill="#fff"/><rect x="13" y="4" width="2" height="7.5" fill="#fff"/><path d="M6.5 19 L10.5 15.5 L14.5 19" fill="none" stroke="#1A5CF2" stroke-width="2" stroke-linecap="round"/></svg>
<div class="t" style="left:766px;top:223px;font-size:9.30px;color:#333;font-weight:normal;">SlidesAI For...</div>
<div style="position:absolute;left:754px;top:258px;width:247px;height:1px;background:#E8E8E8"></div>
<div class="t" style="left:754.5px;top:276px;font-size:11.20px;color:#333;font-weight:bold;">Popular Add-ins</div>
<div style="position:absolute;left:758px;top:313px;width:30px;height:30px;background:#fff;border:1px solid #C8C8C8;box-sizing:border-box"></div>
<div class="t" style="left:795px;top:310px;font-size:10.00px;color:#383838;font-weight:bold;">ChatGPT for PowerPoint</div>
<div class="t" style="left:795px;top:326px;font-size:9.35px;color:#444;font-weight:normal;">AI Presentation Maker. Create slides...</div>
<div class="t" style="left:795px;top:341px;font-size:8.40px;color:#C4553D;font-weight:normal;text-decoration:underline;text-decoration-thickness:1px;text-underline-offset:0px">Terms &amp; Conditions</div>
<div style="position:absolute;left:963px;top:318px;width:32px;height:19px;background:#E5E5E5;border:1px solid #B5B5B5;box-sizing:border-box"></div>
<div class="t" style="left:879px;width:200px;text-align:center;top:322px;font-size:10px;color:#333;font-weight:normal;">Add</div>
<div style="position:absolute;left:758px;top:370px;width:30px;height:30px;background:#fff;border:1px solid #C8C8C8;box-sizing:border-box"></div>
<div class="t" style="left:795px;top:367px;font-size:10.00px;color:#383838;font-weight:bold;">Mentimeter for PowerPoint</div>
<div class="t" style="left:795px;top:383px;font-size:9.35px;color:#444;font-weight:normal;">Gather real-time input from any gro...</div>
<div class="t" style="left:795px;top:397px;font-size:8.40px;color:#C4553D;font-weight:normal;text-decoration:underline;text-decoration-thickness:1px;text-underline-offset:0px">Terms &amp; Conditions</div>
<div style="position:absolute;left:963px;top:375px;width:32px;height:19px;background:#E5E5E5;border:1px solid #B5B5B5;box-sizing:border-box"></div>
<div class="t" style="left:879px;width:200px;text-align:center;top:380px;font-size:10px;color:#333;font-weight:normal;">Add</div>
<div style="position:absolute;left:758px;top:427px;width:30px;height:30px;background:#fff;border:1px solid #C8C8C8;box-sizing:border-box"></div>
<div class="t" style="left:795px;top:424px;font-size:10.00px;color:#383838;font-weight:bold;">Plus AI For PowerPoint</div>
<div class="t" style="left:795px;top:440px;font-size:9.35px;color:#444;font-weight:normal;">AI PowerPoint Generator. Create, ed...</div>
<div style="position:absolute;left:963px;top:432px;width:32px;height:19px;background:#E5E5E5;border:1px solid #B5B5B5;box-sizing:border-box"></div>
<div class="t" style="left:879px;width:200px;text-align:center;top:436px;font-size:10px;color:#333;font-weight:normal;">Add</div>
<div style="position:absolute;left:763px;top:318px;width:20px;height:20px;background:#000"></div>
<svg style="position:absolute;left:763px;top:318px" width="20" height="20" viewBox="0 0 20 20"><circle cx="9.5" cy="9.6" r="4.6" fill="none" stroke="#E8E8E8" stroke-width="0.8"/><path d="M7.2 9.8 a2.6 2.3 0 0 0 5 0.6 M7.4 8.2 a2.4 2.4 0 0 1 4 -1.8" fill="none" stroke="#E8E8E8" stroke-width="0.8"/></svg>
<svg style="position:absolute;left:756px;top:368px" width="34" height="34" viewBox="0 0 34 34"><defs><linearGradient id="mg" x1="0" y1="0" x2="0" y2="1"><stop offset="0" stop-color="#F6C7C7"/><stop offset="1" stop-color="#E43B3B"/></linearGradient></defs><path d="M11 10 H14.2 L18.5 21.5 H11z" fill="url(#mg)"/><path d="M16 14.5 L19.5 12.5 V11.5 H20.7 V9.7 H23.2 V21.4 H18.3z" fill="#1F5BF0"/><rect x="10" y="23.2" width="13.5" height="1.3" fill="#555"/></svg>
<svg style="position:absolute;left:762px;top:428px" width="22" height="22" viewBox="0 0 22 22"><circle cx="11" cy="12.3" r="9.6" fill="#0A0AE6"/><path d="M10 5 V9.2 Q10 11.3 7.9 11.3 H4.6 V13.3 H7.9 Q10 13.3 10 15.4 V19.6 H12 V15.4 Q12 13.3 14.1 13.3 H17.4 V11.3 H14.1 Q12 11.3 12 9.2 V5z" fill="#fff"/></svg>
<div style="position:absolute;left:742px;top:448px;width:265px;height:47px;background:#fff"></div>
<div style="position:absolute;left:754px;top:448px;width:247px;height:1px;background:#EDEDED"></div>
<div style="position:absolute;left:916px;top:464px;width:87px;height:19px;background:#E9E9E9;border:1px solid #C4C4C4;box-sizing:border-box"></div>
<div style="position:absolute;left:926px;top:471px;width:4px;height:4px;background:#FF9B1A;border-radius:50%"></div>
<div class="t" style="left:937px;top:468px;font-size:9.90px;color:#333;font-weight:normal;">More Add-ins</div>
<div style="position:absolute;left:937px;top:12px;width:55px;height:89px;border:3px solid #E31E24;box-sizing:border-box"></div>
<div style="position:absolute;left:756px;top:161px;width:84px;height:91px;border:3px solid #E31E24;box-sizing:border-box"></div>
<svg style="position:absolute;left:840px;top:96px" width="135" height="100" viewBox="0 0 135 100"><path d="M130 4 L20 88" stroke="#E31E24" stroke-width="3"/><path d="M6.5 94.5 L17 79 L25 91z" fill="#E31E24"/></svg>
</body></html>
